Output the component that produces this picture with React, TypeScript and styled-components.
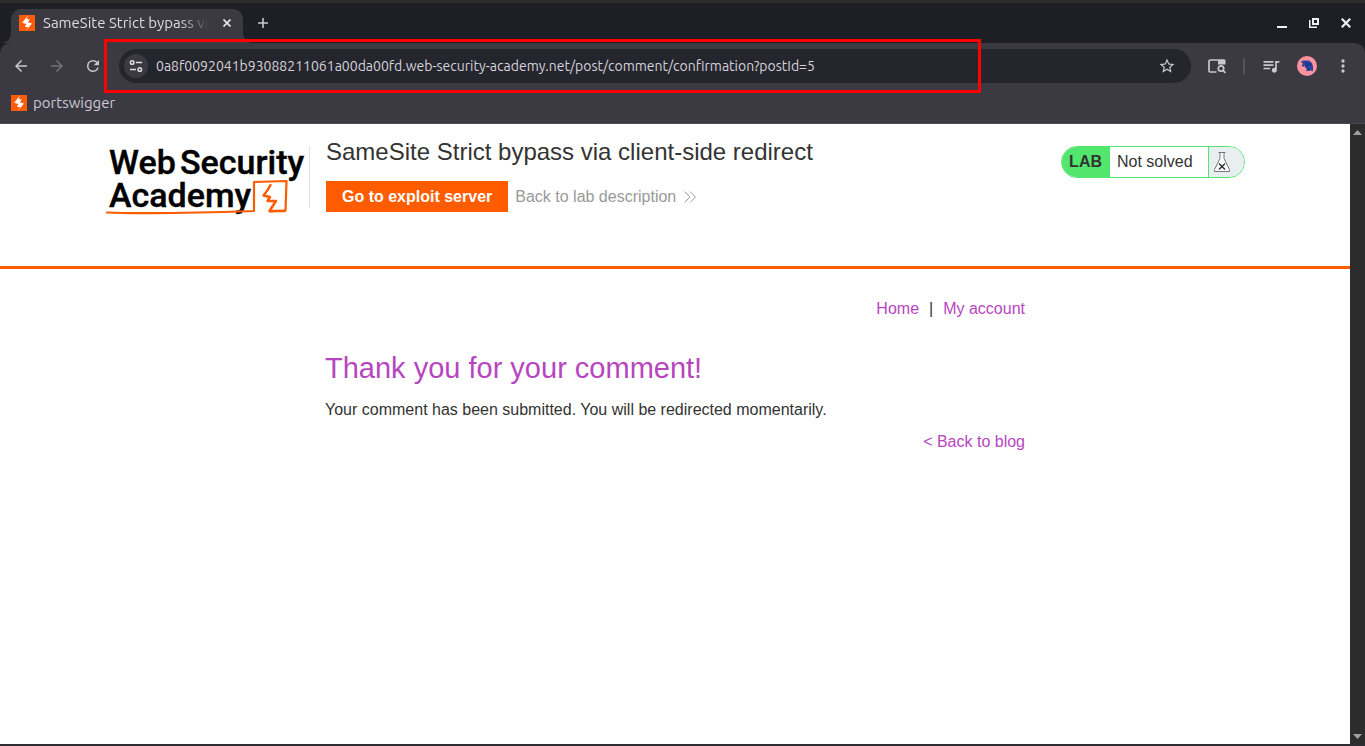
import React from "react";
import styled, { createGlobalStyle } from "styled-components";

const uiFont = `"Ubuntu", "Noto Sans", sans-serif`;

const GlobalStyle = createGlobalStyle`
  * { box-sizing: border-box; }
  body { margin: 0; background: #2b2b2d; }
  button, input { font: inherit; }
  h1, h2, p { margin: 0; font-weight: 400; }
`;

const Window = styled.div`
  display: flex;
  flex-direction: column;
  min-height: 100vh;
  border-top: 3px solid #2d2d2d;
  border-bottom: 2px solid #2d2d30;
  background: #1e1e27;
`;

const TabStrip = styled.div`
  display: flex;
  align-items: flex-end;
  height: 40px;
  padding: 0 9px 0 11px;
  font: 15px/20px ${uiFont};
`;

const Tab = styled.div`
  position: relative;
  display: flex;
  align-items: center;
  gap: 8px;
  width: 232px;
  height: 34px;
  padding: 0 6px 6px 8px;
  border-radius: 10px 10px 0 0;
  background: #3b3a43;
  color: #dddce4;

  &::before, &::after {
    content: "";
    position: absolute;
    bottom: 0;
    width: 10px;
    height: 10px;
  }
  &::before {
    right: 100%;
    background: radial-gradient(circle at 0 0, transparent 10px, #3b3a43 10px);
  }
  &::after {
    left: 100%;
    background: radial-gradient(circle at 100% 0, transparent 10px, #3b3a43 10px);
  }
`;

const TabTitle = styled.span`
  flex: 1;
  overflow: hidden;
  white-space: nowrap;
  mask-image: linear-gradient(to right, #000 82%, transparent);
`;

const IconButton = styled.button<{ $size?: number; $dim?: boolean }>`
  display: flex;
  align-items: center;
  justify-content: center;
  flex: none;
  width: ${(p) => p.$size ?? 28}px;
  height: ${(p) => p.$size ?? 28}px;
  padding: 0;
  border: 0;
  border-radius: 50%;
  background: none;
  color: ${(p) => (p.$dim ? "#72717b" : "#c9c7d2")};
`;

const NewTabSlot = styled.div`
  display: flex;
  padding: 0 0 6px 6px;
`;

const WindowControls = styled.div`
  display: flex;
  gap: 4px;
  margin: 0 -4px 6px auto;
  color: #f0f0f2;

  button { color: inherit; }
`;

const Chrome = styled.div`
  border-bottom: 1px solid #4b4954;
  border-radius: 10px 10px 0 0;
  background: #3b3a43;
  font: 14px/20px ${uiFont};
`;

const Toolbar = styled.div`
  display: flex;
  align-items: center;
  padding: 6px 8px 6px 7px;
`;

const ButtonGroup = styled.div`
  display: flex;
  gap: 8px;
`;

const AddressBar = styled.div`
  position: relative;
  display: flex;
  align-items: center;
  gap: 8px;
  flex: 1;
  height: 34px;
  margin: 0 12px;
  padding: 0 10px 0 5px;
  border-radius: 17px;
  background: #25252d;
`;

const SiteInfo = styled(IconButton)`
  background: #3b3a43;
  color: #dddce4;
`;

const UrlInput = styled.input`
  flex: 1;
  min-width: 0;
  height: 24px;
  padding: 0;
  border: 0;
  outline: 0;
  background: none;
  color: #d4d3da;
`;

const UrlHighlight = styled.div`
  position: absolute;
  top: -10px;
  left: -15px;
  width: calc(82% - 2px);
  height: 54px;
  border: 3px solid #fe0000;
  pointer-events: none;
`;

const Separator = styled.span`
  width: 2px;
  height: 16px;
  margin: 0 12px;
  background: #55535e;
`;

const Bookmarks = styled.nav`
  display: flex;
  height: 34px;
  padding: 4px 11px 10px;
  font-size: 15px;
`;

const Bookmark = styled.a`
  display: flex;
  align-items: center;
  gap: 6px;
  color: #cbc9d3;
  text-decoration: none;
`;

const Viewport = styled.div`
  display: flex;
  flex: 1;
  background: #fff;
  color: #333332;
  font: 16px/20px "Liberation Sans", Arial, sans-serif;
`;

const Page = styled.div`
  flex: 1;
  min-width: 0;
`;

const Scrollbar = styled.div`
  display: flex;
  flex-direction: column;
  align-items: center;
  justify-content: space-between;
  width: 15px;
  padding: 6px 0 5px;
  background: #2c2c2c;
`;

const LabHeader = styled.header`
  height: 145px;
  padding: 12px 20px 0;
  border-bottom: 3px solid #ff5c00;
`;

const HeaderInner = styled.div`
  display: flex;
  align-items: flex-start;
  max-width: 1140px;
  margin: 0 auto;
`;

const Logo = styled.a`
  display: block;
  flex: none;
  width: 205px;
  height: 72px;
  margin-top: 10px;
  color: #000;
`;

const TitleBlock = styled.div`
  position: relative;
  flex: 1;
  padding-left: 16px;

  &::before {
    content: "";
    position: absolute;
    top: 10px;
    left: -1px;
    width: 1px;
    height: 62px;
    background: #e2e2e4;
  }
`;

const LabTitle = styled.h2`
  font-size: 24px;
  line-height: 32px;
`;

const Actions = styled.div`
  display: flex;
  align-items: center;
  gap: 7px;
  margin-top: 13px;
`;

const ExploitButton = styled.a`
  padding: 6px 16px 5px;
  background: #ff5c00;
  color: #fff;
  font-weight: 700;
  text-decoration: none;
`;

const BackLink = styled.a`
  display: flex;
  align-items: center;
  gap: 8px;
  color: #999;
  text-decoration: none;
`;

const Status = styled.div`
  display: flex;
  height: 32px;
  margin-top: 10px;
  overflow: hidden;
  border: 1px solid #52e66f;
  border-radius: 16px;
  line-height: 30px;
`;

const StatusLabel = styled.strong`
  padding: 0 8px 0 7px;
  background: #52e66f;
`;

const StatusText = styled.span`
  width: 98px;
  padding-left: 7px;
`;

const StatusIcon = styled.span`
  display: flex;
  align-items: center;
  width: 36px;
  padding-left: 4px;
  border-left: 1px solid #52e66f;
  background: #e9eef0;
`;

const Content = styled.main`
  max-width: 700px;
  margin: 0 auto;
  padding: 30px 0;
`;

const TopLinks = styled.nav`
  display: flex;
  justify-content: flex-end;
  gap: 10px;
`;

const Link = styled.a`
  color: #b845c0;
  text-decoration: none;
`;

const Heading = styled.h1`
  margin-top: 31px;
  color: #b845c0;
  font-size: 29px;
  line-height: 36px;
`;

const Message = styled.p`
  margin-top: 14px;
`;

const BackToBlog = styled.div`
  margin-top: 12px;
  text-align: right;
`;

const BrandIcon = () => (
  <svg width="16" height="16" viewBox="0 0 16 16" aria-hidden="true">
    <path d="M0 0h16v16H0z" fill="#ff5c0a" />
    <path d="M9 0.5 3.2 7.8l4.2 1.1L6 12h3.2L6.8 15.8 13 8.5 9 7.3 10.6 4.2H7.6z" fill="#fff" />
  </svg>
);

const Glyph = ({ d, size = 18 }: { d: string; size?: number }) => (
  <svg width={size} height={size} viewBox="0 0 24 24" fill="currentColor" aria-hidden="true">
    <path d={d} />
  </svg>
);

const icons = {
  back: "M20 11H7.83l5.59-5.59L12 4l-8 8 8 8 1.41-1.41L7.83 13H20v-2z",
  forward: "M4 11h12.17l-5.59-5.59L12 4l8 8-8 8-1.41-1.41L16.17 13H4v-2z",
  reload:
    "M17.65 6.35A7.96 7.96 0 0 0 12 4a8 8 0 1 0 7.73 10h-2.08A6 6 0 1 1 12 6c1.66 0 3.14.69 4.22 1.78L13 11h7V4l-2.35 2.35z",
  star:
    "M22 9.24l-7.19-.62L12 2 9.19 8.63 2 9.24l5.46 4.73L5.82 21 12 17.27 18.18 21l-1.63-7.03L22 9.24zM12 15.4l-3.76 2.27 1-4.28-3.32-2.88 4.38-.38L12 6.1l1.71 4.04 4.38.38-3.32 2.88 1 4.28L12 15.4z",
  queue:
    "M15 6H3v2h12V6zm0 4H3v2h12v-2zM3 16h8v-2H3v2zM17 6v8.18c-.31-.11-.65-.18-1-.18-1.66 0-3 1.34-3 3s1.34 3 3 3 3-1.34 3-3V8h3V6h-5z",
  more:
    "M12 8a2 2 0 1 0 0-4 2 2 0 0 0 0 4zm0 2a2 2 0 1 0 0 4 2 2 0 0 0 0-4zm0 6a2 2 0 1 0 0 4 2 2 0 0 0 0-4z",
};

const AcademyLogo = () => (
  <svg width="205" height="72" viewBox="0 0 205 72" overflow="visible" role="img" aria-label="Web Security Academy">
    <g fill="#000" stroke="#000" strokeWidth="0.4" fontFamily="Roboto, sans-serif" fontSize="34" fontWeight="500">
      <text x="4" y="28">Web</text>
      <text x="75" y="28">Security</text>
      <text x="4" y="61">Academy</text>
    </g>
    <g fill="none" stroke="#ff5c00" strokeLinecap="round" strokeLinejoin="round">
      <path d="M2 66.5c40 2 95 0 147-1.500L149 36l32.500-1L180.500 64.500 165 65.500" strokeWidth="2.200" />
      <path d="M165.500 39c-2 4-4 7-7 10.500l6.500 1.500-2.500 4h8.500l-6.500 10h15" strokeWidth="2.500" />
    </g>
  </svg>
);

export default function App() {
  return (
    <>
      <GlobalStyle />
      <Window>
        <TabStrip>
          <Tab>
            <BrandIcon />
            <TabTitle>SameSite Strict bypass via client-side redirect</TabTitle>
            <IconButton $size={20} aria-label="Close tab">
              <svg width="8" height="8" viewBox="0 0 8 8" stroke="#e4e3ea" strokeWidth="1.700">
                <path d="M.5.5l7 7M7.500.5l-7 7" />
              </svg>
            </IconButton>
          </Tab>
          <NewTabSlot>
            <IconButton aria-label="New tab">
              <svg width="10" height="10" viewBox="0 0 10 10" fill="none" stroke="currentColor" strokeWidth="1.600">
                <path d="M5 0v10M0 5h10" />
              </svg>
            </IconButton>
          </NewTabSlot>
          <WindowControls>
            <IconButton aria-label="Minimize">
              <svg width="10" height="10" viewBox="0 0 10 10"><path d="M0 8h10v2H0z" fill="currentColor" /></svg>
            </IconButton>
            <IconButton aria-label="Restore">
              <svg width="10" height="10" viewBox="0 0 10 10" fill="none" stroke="currentColor">
                <path d="M4 1h5v5H4z" strokeWidth="2" />
                <path d="M.75 2v7.250H8" strokeWidth="1.500" />
              </svg>
            </IconButton>
            <IconButton aria-label="Close window">
              <svg width="10" height="10" viewBox="0 0 10 10" stroke="currentColor" strokeWidth="2.200">
                <path d="M.8.8l8.400 8.400M9.200.8L.8 9.200" />
              </svg>
            </IconButton>
          </WindowControls>
        </TabStrip>

        <Chrome>
          <Toolbar>
            <ButtonGroup>
              <IconButton aria-label="Back"><Glyph d={icons.back} /></IconButton>
              <IconButton $dim aria-label="Forward"><Glyph d={icons.forward} /></IconButton>
              <IconButton aria-label="Reload"><Glyph d={icons.reload} /></IconButton>
            </ButtonGroup>
            <AddressBar>
              <SiteInfo $size={24} aria-label="View site information">
                <svg width="14" height="14" viewBox="0 0 14 14" fill="none" stroke="currentColor" strokeWidth="1.500">
                  <circle cx="3.200" cy="3.500" r="1.800" />
                  <path d="M7 3.500h6M1 10.500h6" />
                  <circle cx="10.800" cy="10.500" r="1.800" />
                </svg>
              </SiteInfo>
              <UrlInput
                aria-label="Address"
                defaultValue="0a8f0092041b93088211061a00da00fd.web-security-academy.net/post/comment/confirmation?postId=5"
              />
              <IconButton aria-label="Bookmark this page"><Glyph d={icons.star} /></IconButton>
              <UrlHighlight />
            </AddressBar>
            <IconButton aria-label="Search tabs">
              <svg width="18" height="16" viewBox="0 0 18 16" fill="none" stroke="currentColor" strokeWidth="1.700">
                <path d="M8.500 14H2.300A1.300 1.300 0 0 1 1 12.700V3.300A1.300 1.300 0 0 1 2.300 2H10" />
                <path d="M10 1.200h6A1.500 1.500 0 0 1 17.500 2.700V6.500H10z" fill="currentColor" stroke="none" />
                <circle cx="13" cy="10.500" r="2.700" />
                <path d="M15 12.500l2.500 2.500" />
              </svg>
            </IconButton>
            <Separator />
            <ButtonGroup>
              <IconButton aria-label="Media controls"><Glyph d={icons.queue} size={20} /></IconButton>
              <IconButton aria-label="Profile">
                <svg width="20" height="20" viewBox="0 0 20 20">
                  <circle cx="10" cy="10" r="10" fill="#fe929c" />
                  <path d="M4 5.500l2-1h6l3 2.500 1 3.500V15h-2.200v-2l-1 2H9.500v-2.500L8 11.500 7.500 9.500 6 11 4.500 9.500 6 8z" fill="#2a45a0" />
                  <path d="M8 6.500l2.500 2-1 2.500M12 7l2 3M12 12v2" stroke="#17245e" fill="none" />
                </svg>
              </IconButton>
              <IconButton aria-label="Menu"><Glyph d={icons.more} size={20} /></IconButton>
            </ButtonGroup>
          </Toolbar>
          <Bookmarks>
            <Bookmark href="#"><BrandIcon />portswigger</Bookmark>
          </Bookmarks>
        </Chrome>

        <Viewport>
          <Page>
            <LabHeader>
              <HeaderInner>
                <Logo href="#"><AcademyLogo /></Logo>
                <TitleBlock>
                  <LabTitle>SameSite Strict bypass via client-side redirect</LabTitle>
                  <Actions>
                    <ExploitButton href="#">Go to exploit server</ExploitButton>
                    <BackLink href="#">
                      Back to lab description
                      <svg width="13" height="12" viewBox="0 0 13 12" fill="none" stroke="#999" aria-hidden="true">
                        <path d="M.5.5L6 6 .5 11.500M6 .5L11.500 6 6 11.500" />
                      </svg>
                    </BackLink>
                  </Actions>
                </TitleBlock>
                <Status>
                  <StatusLabel>LAB</StatusLabel>
                  <StatusText>Not solved</StatusText>
                  <StatusIcon>
                    <svg width="18" height="22" viewBox="0 0 18 22" fill="none" stroke="#777" aria-hidden="true">
                      <path d="M5.500 1.500h7M7 1.500v6L1.500 18.500v2h15v-2L11 7.500v-6" fill="#fff" />
                      <path d="M6 12.500l6 6M12 12.500l-6 6" stroke="#333" strokeWidth="1.500" />
                    </svg>
                  </StatusIcon>
                </Status>
              </HeaderInner>
            </LabHeader>
            <Content>
              <TopLinks>
                <Link href="#">Home</Link>
                <span>|</span>
                <Link href="#">My account</Link>
              </TopLinks>
              <Heading>Thank you for your comment!</Heading>
              <Message>Your comment has been submitted. You will be redirected momentarily.</Message>
              <BackToBlog><Link href="#">&lt; Back to blog</Link></BackToBlog>
            </Content>
          </Page>
          <Scrollbar>
            <svg width="9" height="6" viewBox="0 0 9 6"><path d="M4.500 0L9 5H0z" fill="#a0a0a0" /></svg>
            <svg width="9" height="6" viewBox="0 0 9 6"><path d="M0 1h9L4.500 6z" fill="#a0a0a0" /></svg>
          </Scrollbar>
        </Viewport>
      </Window>
    </>
  );
}
